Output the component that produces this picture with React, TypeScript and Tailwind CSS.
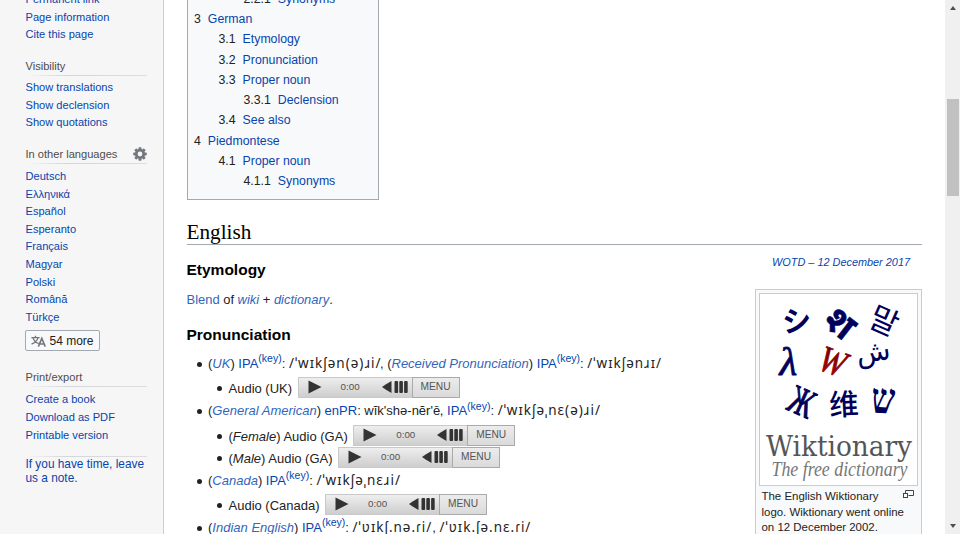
import type { ReactNode } from "react";

const LINK = "text-[#0645ad]";
const EXT = "text-[#3366bb]";

function SideHeader({ children, gear }: { children: ReactNode; gear?: boolean }) {
  return (
    <div className="relative flex h-[19px] w-[121px] items-center justify-between text-[#4d4d4d]">
      <span>{children}</span>
      {gear && <Gear />}
      <div className="absolute bottom-0 left-0 h-px w-full bg-gradient-to-r from-transparent via-[#d4d7da] via-33% to-[#dcdee0]" />
    </div>
  );
}

function Gear() {
  return (
    <svg viewBox="0 0 20 20" className="h-[14px] w-[14px]" fill="#72777d">
      <g transform="translate(10 10)">
        {[0, 45, 90, 135].map((a) => (
          <rect key={a} x="-2.1" y="-9.6" width="4.2" height="19.2" rx="1" transform={`rotate(${a})`} />
        ))}
        <circle r="7.2" />
        <circle r="3.4" fill="#f6f6f6" />
      </g>
    </svg>
  );
}

function SideList({ items }: { items: string[] }) {
  return (
    <ul>
      {items.map((t) => (
        <li key={t} className={`flex h-[17.6px] items-center ${LINK}`}>
          {t}
        </li>
      ))}
    </ul>
  );
}

function Sidebar() {
  return (
    <aside className="h-full w-[164px] shrink-0 overflow-hidden border-r border-r-[#a7d7f9] bg-[#f6f6f6] pl-[25.5px] text-[11.1px] whitespace-nowrap">
      <div className="-mt-[9.5px] h-[66px]">
        <SideList items={["Permanent link", "Page information", "Cite this page"]} />
      </div>
      <SideHeader>Visibility</SideHeader>
      <div className="h-[69px] pt-[3px]">
        <SideList items={["Show translations", "Show declension", "Show quotations"]} />
      </div>
      <SideHeader gear>In other languages</SideHeader>
      <div className="h-[166.5px] pt-[4px]">
        <SideList items={["Deutsch", "Ελληνικά", "Español", "Esperanto", "Français", "Magyar", "Polski", "Română", "Türkçe"]} />
      </div>
      <div className="-ml-px flex h-[21px] w-[75px] items-center rounded-[2px] border border-[#a2a9b1] bg-[#f8f9fa] pl-[5px] text-[12px] text-[#222]">
        <svg viewBox="0 0 20 16" className="mr-[4px] h-[12px] w-[15px]" fill="none" stroke="#72777d" strokeWidth="1.8">
          <path d="M0.5 3.5H11.5M6 1V3.5M2.5 3.5C4 8 7 10.5 10.5 11.5M9.5 3.5C8 8 5 10.5 0.8 12" />
          <path d="M9.8 15.5L14.4 4.5L19 15.5M11.2 12H17.6" strokeWidth="2.1" />
        </svg>
        54 more
      </div>
      <div className="h-[17px]" />
      <SideHeader>Print/export</SideHeader>
      <div className="h-[69px] pt-[4px]">
        <SideList items={["Create a book", "Download as PDF", "Printable version"]} />
      </div>
      <div className="h-px w-[121px] bg-gradient-to-r from-transparent via-[#d4d7da] via-33% to-[#dcdee0]" />
      <p className={`text-[11.85px] leading-[14px] ${LINK}`}>
        If you have time, leave
        <br />
        us a note.
      </p>
    </aside>
  );
}

const TOC: [number, string, string][] = [
  [2, "2.2.1", "Synonyms"],
  [0, "3", "German"],
  [1, "3.1", "Etymology"],
  [1, "3.2", "Pronunciation"],
  [1, "3.3", "Proper noun"],
  [2, "3.3.1", "Declension"],
  [1, "3.4", "See also"],
  [0, "4", "Piedmontese"],
  [1, "4.1", "Proper noun"],
  [2, "4.1.1", "Synonyms"],
];
const TOC_INDENT = ["pl-0", "pl-[24.5px]", "pl-[49.5px]"];

function Toc() {
  return (
    <ul className="h-[200px] w-[192.5px] overflow-hidden border border-t-0 border-[#a2a9b1] bg-[#f8f9fa] pl-[6.5px] text-[12.3px]">
      {TOC.map(([level, num, label], i) => (
        <li key={num} className={`flex h-[20.25px] items-center ${TOC_INDENT[level]} ${i === 0 ? "-mt-[11px]" : ""}`}>
          <span className="mr-[7px] text-[#222]">{num}</span>
          <span className={LINK}>{label}</span>
        </li>
      ))}
    </ul>
  );
}

function Player() {
  return (
    <span className="ml-[5.5px] flex h-[21px] w-[162px] shrink-0 bg-gradient-to-b from-[#f0f0f0] to-[#cccccc]">
      <span className="flex w-[114px] items-center border border-r-0 border-[#c9c9c9] pl-[9px]">
        <svg viewBox="0 0 14 14" className="h-[14px] w-[14px]" fill="#333">
          <path d="M0.5 0.5L13.5 7L0.5 13.5Z" />
        </svg>
        <span className="ml-[19px] w-[41px] pt-px text-[9.8px] text-[#555]">0:00</span>
        <svg viewBox="0 0 27 14" className="h-[14px] w-[27px]" fill="#333">
          <path d="M0 7L4 4.2L9.5 1V13L4 9.8Z" />
          <rect x="12.5" y="1" width="3.6" height="12" rx="1" />
          <rect x="17.3" y="1" width="3.6" height="12" rx="1" />
          <rect x="22.1" y="1" width="3.6" height="12" rx="1" />
        </svg>
      </span>
      <span className="flex w-[48px] items-center justify-center border border-[#aaa] bg-gradient-to-b from-[#ececec] to-[#dadada] text-[10.2px] text-[#555]">
        MENU
      </span>
    </span>
  );
}

function Row({ className, children }: { className: string; children: ReactNode }) {
  return (
    <li className={`flex items-center pl-[10px] text-[13px] whitespace-pre ${className}`}>
      <span className="mt-px mr-[6.5px] h-[5px] w-[5px] shrink-0 rounded-full bg-[#222]" />
      {children}
    </li>
  );
}

function AudioRow({ children }: { children: ReactNode }) {
  return (
    <li className="flex h-[22px] items-center pl-[30.5px] text-[13px] whitespace-pre">
      <span className="mt-[3px] mr-[6.5px] h-[5px] w-[5px] shrink-0 rounded-full bg-[#222]" />
      <span className="pt-[3px]">{children}</span>
      <Player />
    </li>
  );
}

function Key() {
  return (
    <>
      <span className={LINK}>IPA</span>
      <span className={`-mt-[9px] text-[10.5px] ${LINK}`}>(key)</span>
      <span>: </span>
    </>
  );
}

function Ipa({ className, children }: { className?: string; children: ReactNode }) {
  return (
    <span className={`shrink-0 font-['Noto_Sans','DejaVu_Sans',sans-serif] text-[13.5px] leading-none tracking-[1px] ${className ?? ""}`}>
      {children}
    </span>
  );
}

function Logo() {
  return (
    <svg viewBox="759.5 294 158 191" className="block h-[191px] w-[158px]" fill="#00005a" textAnchor="middle">
      <defs>
        <linearGradient id="red" x1="0" y1="0" x2="0" y2="1">
          <stop offset="0" stopColor="#5a0000" />
          <stop offset="1" stopColor="#c00000" />
        </linearGradient>
      </defs>
      <text transform="translate(797 331.5) rotate(-4)" className="font-['Noto_Sans_CJK_JP',sans-serif] text-[29px] font-bold">シ</text>
      <text transform="translate(832 333) rotate(38)" stroke="#00005a" strokeWidth="0.6" className="font-['Noto_Sans',sans-serif] text-[37px] font-bold">श</text>
      <text transform="translate(879 331) rotate(24)" className="font-['Noto_Sans_CJK_KR',sans-serif] text-[31px]">말</text>
      <text x="788" y="375" stroke="#00005a" strokeWidth="0.8" className="font-['Liberation_Serif',serif] text-[41px] italic">λ</text>
      <text transform="translate(828 373) rotate(20) scale(.95 1.12)" fill="url(#red)" stroke="#8a0000" strokeWidth="0.7" className="font-['Liberation_Serif',serif] text-[33px] italic">W</text>
      <text transform="translate(874 361) rotate(-8)" className="font-['DejaVu_Sans',sans-serif] text-[28px]">ش</text>
      <text transform="translate(796 414) rotate(24) scale(.88 1.3)" stroke="#00005a" strokeWidth="0.8" className="font-['Liberation_Serif',serif] text-[31px]">Ж</text>
      <text transform="translate(844 415) rotate(-3)" className="font-['Noto_Sans_CJK_SC',sans-serif] text-[29.5px] font-medium">维</text>
      <text transform="translate(882 413) rotate(3) scale(.9 1.15)" className="font-['Liberation_Serif',serif] text-[37px] font-bold">ש</text>
      <text x="765.5" y="455.5" textAnchor="start" textLength="146" lengthAdjust="spacingAndGlyphs" fill="#555" className="font-['DejaVu_Serif_Condensed','DejaVu_Serif',serif] text-[27px]">Wiktionary</text>
      <text x="771" y="476" textAnchor="start" textLength="136" lengthAdjust="spacingAndGlyphs" fill="#777" className="font-['Liberation_Serif',serif] text-[20px] italic">The free dictionary</text>
    </svg>
  );
}

function Aside() {
  return (
    <div className="w-[167px] shrink-0">
      <p className={`mt-[9px] h-[16px] pl-[17.5px] text-[10.9px] leading-4 whitespace-nowrap italic ${LINK}`}>WOTD – 12 December 2017</p>
      <div className="mt-[19px] h-[260px] border border-[#c8ccd1] bg-[#f8f9fa] p-[3px]">
        <div className="border border-[#c8ccd1] bg-white">
          <Logo />
        </div>
        <div className="flex justify-between pt-[3px] pr-[4px] pl-[3px] text-[11.45px] leading-[15.7px] whitespace-nowrap text-[#222]">
          <p>
            The English Wiktionary
            <br />
            logo. Wiktionary went online
            <br />
            on 12 December 2002.
          </p>
          <svg viewBox="0 0 11 9" className="mt-[1px] -ml-[11px] h-[9px] w-[11px] shrink-0" fill="none" stroke="#444" strokeWidth="1">
            <path d="M2.5 3.5V0.5H10.5V5.5H5.5" />
            <rect x="0.5" y="3.5" width="4" height="4" fill="#fff" />
          </svg>
        </div>
      </div>
    </div>
  );
}

function Article() {
  return (
    <div className="w-[568px] shrink-0">
      <h3 className="mt-[15px] h-[20px] text-[15.5px] leading-5 font-bold text-black">Etymology</h3>
      <p className="mt-[10px] h-[19px] text-[12.95px] leading-[19px]">
        <span className={EXT}>Blend</span> of <i className={EXT}>wiki</i> + <i className={EXT}>dictionary</i>.
      </p>
      <h3 className="mt-[16px] h-[20px] text-[15.5px] leading-5 font-bold text-black">Pronunciation</h3>
      <ul className="mt-[6px]">
        <Row className="h-[25px]">
          (<i className={EXT}>UK</i>) <Key />
          <Ipa className="w-[91px]">/ˈwɪkʃən(ə)ɹi/</Ipa>, (<i className={EXT}>Received Pronunciation</i>) <Key />
          <Ipa>/ˈwɪkʃənɹɪ/</Ipa>
        </Row>
        <AudioRow>Audio (UK)</AudioRow>
        <Row className="h-[26px]">
          (<i className={EXT}>General American</i>) <span className={LINK}>enPR</span>: <span className="w-[75.5px]">wĭk'shə-nĕr'ē</span>, <Key />
          <Ipa>/ˈwɪkʃəˌnɛ(ə)ɹi/</Ipa>
        </Row>
        <AudioRow>
          (<i>Female</i>) Audio (GA)
        </AudioRow>
        <AudioRow>
          (<i>Male</i>) Audio (GA)
        </AudioRow>
        <Row className="h-[25px]">
          (<i className={EXT}>Canada</i>) <Key />
          <Ipa>/ˈwɪkʃəˌnɛɹi/</Ipa>
        </Row>
        <AudioRow>Audio (Canada)</AudioRow>
        <Row className="h-[25px]">
          (<i className={EXT}>Indian English</i>) <Key />
          <Ipa>/ˈʋɪkʃ.nə.ɾi/</Ipa>, <Ipa>/ˈʋɪk.ʃə.nɛ.ɾi/</Ipa>
        </Row>
      </ul>
    </div>
  );
}

export default function App() {
  return (
    <div className="flex h-[534px] w-[960px] overflow-hidden bg-white font-['Liberation_Sans',Arial,sans-serif] text-[#222]">
      <Sidebar />
      <main className="h-full w-[781px] shrink-0 overflow-hidden pl-[22.5px]">
        <Toc />
        <h2 className="mt-[20px] h-[25px] w-[735px] border-b border-[#a2a9b1] font-['Liberation_Serif',serif] text-[21.2px] leading-[24px] text-black">English</h2>
        <div className="flex">
          <Article />
          <Aside />
        </div>
      </main>
      <div className="flex h-full w-[15px] shrink-0 flex-col items-center justify-between bg-[#f0f0f0] py-[6px]">
        <div className="h-0 w-0 border-x-[3.5px] border-b-[4px] border-x-transparent border-b-[#505050]" />
        <div className="mb-[240px] h-[97px] w-[12px] bg-[#c1c1c1]" />
        <div className="h-0 w-0 border-x-[3.5px] border-t-[4px] border-x-transparent border-t-[#505050]" />
      </div>
    </div>
  );
}
